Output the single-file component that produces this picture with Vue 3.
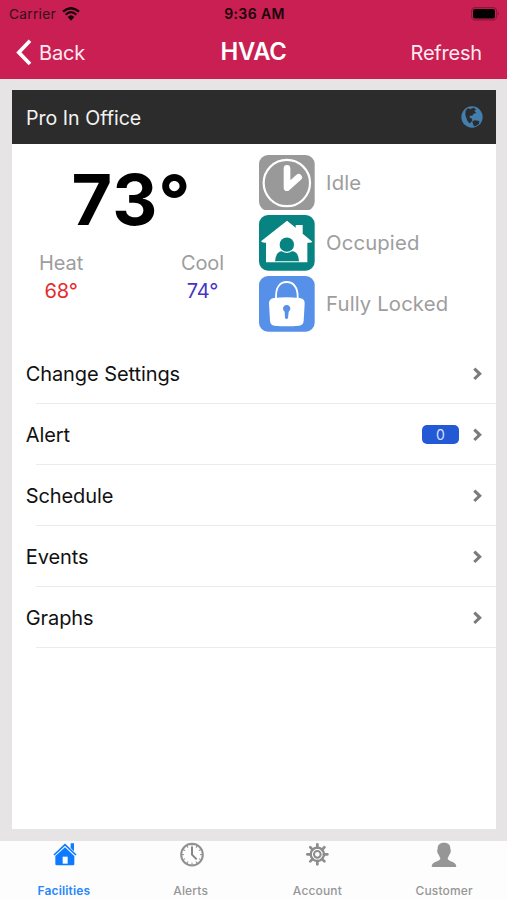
<script setup>
const rows = [
  { label: 'Change Settings' },
  { label: 'Alert', badge: '0' },
  { label: 'Schedule' },
  { label: 'Events' },
  { label: 'Graphs' },
]
const teeth = [0, 45, 90, 135, 180, 225, 270, 315]
const ticks = [0, 30, 60, 90, 120, 150, 180, 210, 240, 270, 300, 330]
</script>

<template>
  <div class="screen">
    <header class="top">
      <div class="status">
        <div class="carrier">
          <span>Carrier</span>
          <svg class="wifi" width="18" height="14" viewBox="0 0 54 42">
            <path d="M3 14Q27 -7 51 14" fill="none" stroke="#16040b" stroke-width="7" />
            <path d="M11 23Q27 8 43 23" fill="none" stroke="#16040b" stroke-width="6.5" />
            <path d="M17 30Q27 20 37 30L27 41Z" fill="#16040b" />
          </svg>
        </div>
        <span class="time">9:36 AM</span>
        <svg class="battery" width="29" height="14" viewBox="0 0 29 14">
          <rect x=".6" y=".6" width="25" height="12.3" rx="3.6" fill="none" stroke="#8a173d" stroke-width="1.1" />
          <rect x="2" y="2" width="22" height="9.5" rx="2.2" fill="#030001" />
          <path d="M27 4.7q2 2 0 4z" fill="#8a173d" />
        </svg>
      </div>
      <nav class="nav">
        <div class="back">
          <svg width="16" height="27" viewBox="0 0 16 27">
            <path d="M14 1.8L2.8 13.4L14 25" fill="none" stroke="#fff" stroke-width="3.7" />
          </svg>
          <span>Back</span>
        </div>
        <h1>HVAC</h1>
        <span class="refresh">Refresh</span>
      </nav>
    </header>

    <main class="card">
      <div class="card-head">
        <span>Pro In Office</span>
        <svg width="22" height="22" viewBox="0 0 66 66">
          <circle cx="33" cy="33" r="32" fill="#427fae" />
          <path d="M20 7L28 9L38 5L45 10L40 15L46 20L37 24L34 29L27 29L25 34L33 38L34 43L29 50L25 52L19 44L16 35L13 27L14 14Z" fill="#2c2c2c" />
          <path d="M34 46L42 43L55 45L54 53L46 59L39 61L36 54Z" fill="#2c2c2c" />
        </svg>
      </div>

      <section class="summary">
        <div class="temps">
          <div class="current">73°</div>
          <div class="points">
            <div class="point heat"><span>Heat</span><b>68°</b></div>
            <div class="point cool"><span>Cool</span><b>74°</b></div>
          </div>
        </div>
        <div class="states">
          <div class="state">
            <svg viewBox="0 0 167 167">
              <rect width="167" height="167" rx="27" fill="#999" />
              <circle cx="83.5" cy="84" r="69.5" fill="none" stroke="#fff" stroke-width="6.5" />
              <path d="M84 40V98L119 67" fill="none" stroke="#fff" stroke-width="20" stroke-linecap="round" stroke-linejoin="round" />
            </svg>
            <span>Idle</span>
          </div>
          <div class="state">
            <svg viewBox="0 0 167 167">
              <rect width="167" height="167" rx="27" fill="#078481" />
              <path d="M84 17L110 38V30H131V56L160 80Q158 84 145 83V142H21V83Q9 84 6 79Z" fill="#fff" />
              <path d="M48 139Q50 112 67 109H101Q119 112 120 139Z" fill="#078481" />
              <circle cx="83.5" cy="89" r="25" fill="#fff" />
              <circle cx="83.5" cy="89" r="21.5" fill="#078481" />
            </svg>
            <span>Occupied</span>
          </div>
          <div class="state">
            <svg viewBox="0 0 167 167">
              <rect width="167" height="167" rx="27" fill="#5690e8" />
              <path d="M51 68V62C51 34 63 18 83 18S116 34 116 62V68" fill="none" stroke="#fff" stroke-width="5.5" />
              <path d="M45 66Q83 62 121 66Q137 67 137 82L134 134Q133 148 120 149Q83 152 46 149Q34 148 33 134L30 82Q30 68 45 66Z" fill="#fff" />
              <path d="M77 107L78 126Q83 132 87 126L89 107A11 11 0 1 0 77 107Z" fill="#5690e8" />
            </svg>
            <span>Fully Locked</span>
          </div>
        </div>
      </section>

      <ul class="menu">
        <li v-for="r in rows" :key="r.label">
          <span>{{ r.label }}</span>
          <span v-if="r.badge" class="badge">{{ r.badge }}</span>
          <svg width="9" height="14" viewBox="0 0 9 14">
            <path d="M1.3 1.6L6.7 6.8L1.3 12" fill="none" stroke="#7b7b7b" stroke-width="3.1" />
          </svg>
        </li>
      </ul>
    </main>

    <footer class="tabs">
      <div class="tab active">
        <svg class="shifted" viewBox="0 0 78 78">
          <path d="M56 7H66V31L56 21Z" fill="#0e7aff" />
          <path d="M6 42L39 11L72 42" fill="none" stroke="#0e7aff" stroke-width="5" />
          <path d="M39 19L67 45V70Q67 73 63 73H15Q10 73 10 70V45Z" fill="#0e7aff" />
          <rect x="32" y="47" width="15" height="21" fill="#fff" />
        </svg>
        <span>Facilities</span>
      </div>
      <div class="tab">
        <svg class="shifted" viewBox="0 0 78 78">
          <circle cx="39" cy="41" r="32.5" fill="none" stroke="#909090" stroke-width="6" />
          <line v-for="a in ticks" :key="a" x1="39" y1="10" x2="39" y2="17" stroke="#909090" stroke-width="3" :transform="`rotate(${a} 39 41)`" />
          <path d="M39 17V41L53 55" fill="none" stroke="#858585" stroke-width="6" />
        </svg>
        <span>Alerts</span>
      </div>
      <div class="tab">
        <svg viewBox="0 0 78 78">
          <line v-for="a in teeth" :key="a" x1="40" y1="10" x2="40" y2="20" stroke="#8c8c8c" stroke-width="8" stroke-linecap="round" :transform="`rotate(${a} 40 40)`" />
          <circle cx="40" cy="40" r="20" fill="none" stroke="#8c8c8c" stroke-width="7" />
          <circle cx="40" cy="40" r="10" fill="none" stroke="#8c8c8c" stroke-width="6" />
        </svg>
        <span>Account</span>
      </div>
      <div class="tab">
        <svg viewBox="0 0 78 78">
          <path d="M39 5C53 5 58 12 58 23C61 28 59 37 55 41C53 47 50 49 50 54C53 62 75 61 76 76Q76 78 73 78H5Q2 78 2 76C3 61 25 62 28 54C28 49 25 47 23 41C19 37 17 28 20 23C20 12 25 5 39 5Z" fill="#969696" />
        </svg>
        <span>Customer</span>
      </div>
    </footer>
  </div>
</template>

<style>
body {
  margin: 0;
  background: #e7e4e5;
}
</style>

<style scoped>
.screen {
  width: 507px;
  height: 900px;
  display: flex;
  flex-direction: column;
  background: #e7e4e5;
  font-family: Inter, "Liberation Sans", sans-serif;
  overflow: hidden;
  white-space: nowrap;
}
.top {
  height: 79px;
  flex: none;
  background: #c91f52;
  margin-bottom: 11px;
}
.status {
  height: 27px;
  display: grid;
  grid-template-columns: 1fr auto 1fr;
  align-items: center;
  padding: 0 7px 0 9px;
  font-size: 13.7px;
  color: #31101c;
}
.carrier {
  display: flex;
  align-items: center;
  gap: 6px;
  letter-spacing: 0.3px;
}
.time {
  font-weight: 600;
  font-size: 14px;
  letter-spacing: 0.4px;
  color: #180309;
}
.battery {
  justify-self: end;
}
.nav {
  height: 51px;
  display: grid;
  grid-template-columns: 1fr auto 1fr;
  align-items: center;
  padding: 0 25px 0 16px;
  font-size: 20px;
  letter-spacing: -0.2px;
  color: #ffeaf1;
}
.back {
  display: flex;
  align-items: center;
  gap: 7px;
}
h1 {
  margin: 0;
  padding: 0 0 2px 9px;
  font-size: 23.8px;
  font-weight: 600;
  letter-spacing: -0.3px;
  color: #fff;
}
.refresh {
  justify-self: end;
}
.card {
  width: 484px;
  height: 739px;
  flex: none;
  margin: 0 0 12px 12px;
  background: #fff;
}
.card-head {
  height: 54px;
  display: flex;
  align-items: center;
  justify-content: space-between;
  padding: 0 13px 0 14px;
  background: #2c2c2c;
  color: #f2f2f2;
  font-size: 19.6px;
}
.card-head span {
  padding-top: 1px;
}
.summary {
  height: 199px;
  display: flex;
}
.temps {
  width: 247px;
  flex: none;
}
.current {
  height: 105px;
  line-height: 112px;
  padding-left: 59.5px;
  font-size: 70px;
  font-weight: 700;
  letter-spacing: 1.2px;
  color: #000;
}
.points {
  display: flex;
  justify-content: space-between;
  padding: 0 35px 0 27px;
}
.point {
  display: flex;
  flex-direction: column;
  align-items: center;
  font-size: 20px;
  line-height: 28px;
  letter-spacing: -0.1px;
  color: #9d9d9d;
}
.point b {
  font-weight: 400;
}
.heat b {
  color: #e52b2d;
}
.cool b {
  color: #4636c2;
}
.states {
  display: flex;
  flex-direction: column;
  gap: 5px;
  padding-top: 10.8px;
}
.state {
  display: flex;
  align-items: center;
  gap: 11.4px;
  height: 55.7px;
  font-size: 20.3px;
  line-height: 24px;
  letter-spacing: 0.14px;
  color: #9d9d9d;
}
.state svg {
  width: 55.7px;
  height: 55.7px;
}
.menu {
  list-style: none;
  margin: 0;
  padding: 0;
}
.menu li {
  height: 61.1px;
  box-sizing: border-box;
  display: flex;
  align-items: center;
  padding: 0 14px 0 13.7px;
  font-size: 20px;
  letter-spacing: -0.08px;
  color: #111;
  background: linear-gradient(#ebebeb, #ebebeb) 24px 100% / 460px 1.4px no-repeat;
}
.menu li svg {
  margin-left: auto;
}
.menu .badge {
  width: 37px;
  height: 19px;
  margin-left: auto;
  border-radius: 5px;
  background: #2459d6;
  color: #d4e1ff;
  font-size: 14px;
  line-height: 20px;
  text-align: center;
}
.menu li .badge + svg {
  margin-left: 14px;
}
.tabs {
  height: 59px;
  flex: none;
  display: grid;
  grid-template-columns: repeat(4, 1fr);
  background: #fdfdfd;
}
.tab {
  display: flex;
  flex-direction: column;
  align-items: center;
  font-size: 12px;
  font-weight: 500;
  line-height: 16px;
  letter-spacing: 0.15px;
  color: #969696;
}
.tab span {
  padding-left: 1px;
}
.tab svg {
  width: 26px;
  height: 26px;
  margin-bottom: 16px;
}
.tab .shifted {
  margin-left: 4px;
}
.active {
  color: #2686ff;
  font-weight: 600;
}
</style>
